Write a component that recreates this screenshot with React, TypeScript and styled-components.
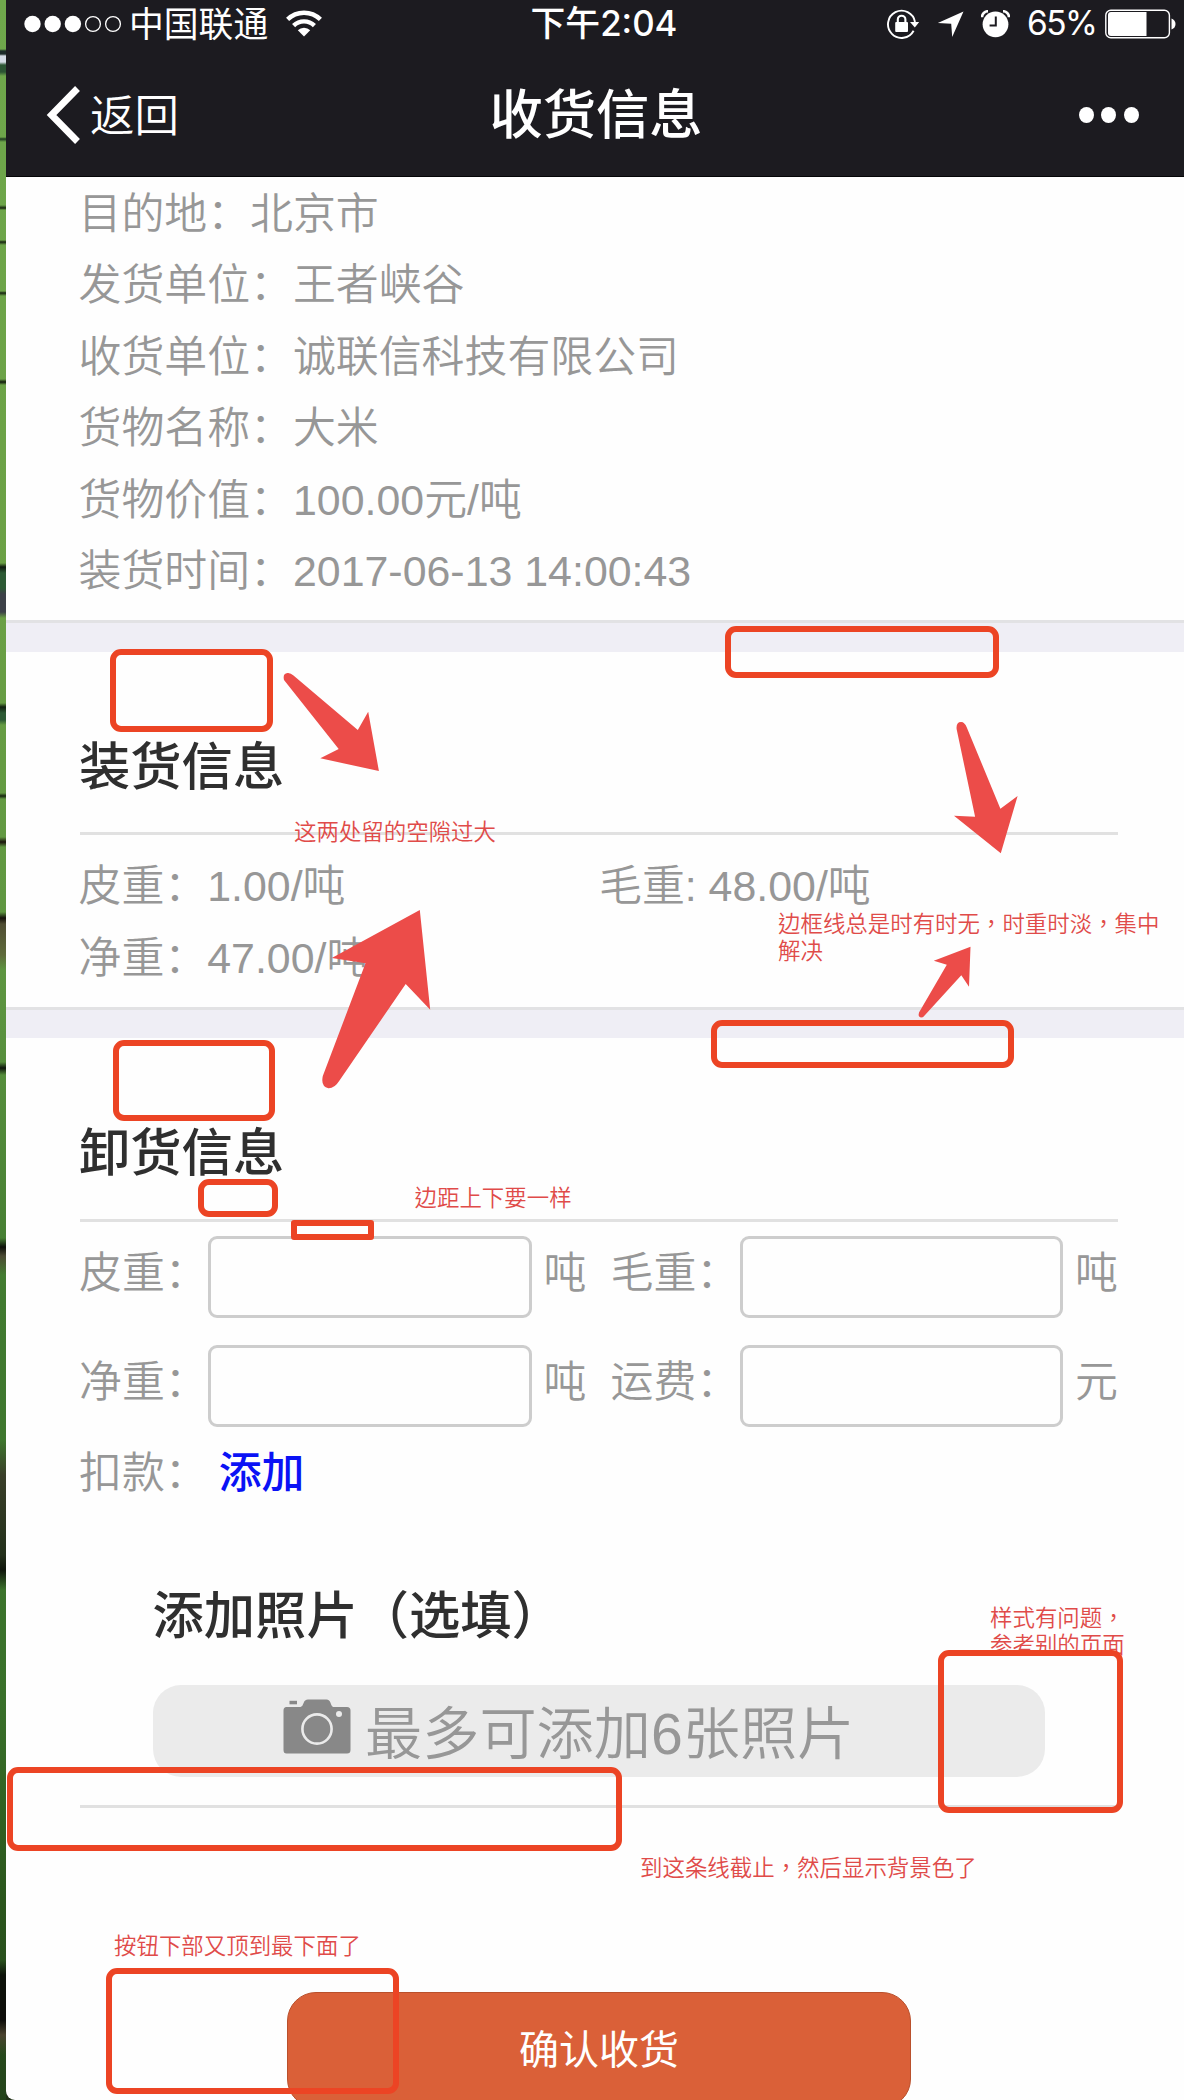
import React from "react";
import styled, { createGlobalStyle } from "styled-components";

const GlobalStyle = createGlobalStyle`
  * { box-sizing: border-box; }
  html, body { margin: 0; padding: 0; overflow: hidden; }
  body { background: #fefefe; }
`;

const SANS = `"Liberation Sans", "Noto Sans CJK SC", sans-serif`;

const Screen = styled.div`
  position: relative;
  display: grid;
  grid-template-columns: 6px 1fr;
  width: 1184px;
  height: 2100px;
  overflow: hidden;
  background: #22331a;
  font-family: ${SANS};
`;

const Desktop = styled.aside`
  background:
    linear-gradient(
      180deg,
      transparent 49px, #1b2a28 51px, #1b2a28 54px, #d5dce6 56px, #d5dce6 62px,
      #2b5433 65px, #2b5433 72px, transparent 76px, transparent 137px,
      #1d3a20 139px, transparent 142px, transparent 205px, #15230f 208px,
      transparent 210px, transparent 240px, #15230f 242px, transparent 245px,
      transparent 291px, #15230f 293px, transparent 296px, transparent 379px,
      #101a0c 382px, transparent 385px, transparent 563px, #0f1a0f 567px,
      #2c5a34 573px, #2c5a34 588px, #3c4148 594px, #3c4148 612px,
      transparent 618px, transparent 703px, #11200f 707px, #2c5a34 713px,
      #2c5a34 720px, transparent 725px, transparent 793px, #16240f 796px,
      transparent 799px, transparent 837px, #1a140c 842px, transparent 847px,
      transparent 912px, #14100a 918px, #4f4d33 924px, #5e6a3a 955px,
      transparent 970px, transparent 1062px, #0d150c 1068px, transparent 1075px,
      transparent 1238px, #0d100a 1247px, #4b4a33 1256px, transparent 1275px,
      transparent 1440px, #3a3f29 1475px, #2a351f 1530px, #23301b 1555px,
      #10160c 1570px, transparent 1590px, transparent 1960px, #0d120a 1975px,
      #0d0d0a 2020px, #4a432f 2035px, transparent 2055px
    ),
    linear-gradient(180deg, #6fa84c 0, #6ba045 600px, #5c9440 1000px, #417a30 1300px, #39702a 1700px, #2b561d 1900px, #24441b 2100px);
`;

const Phone = styled.main`
  display: flex;
  flex-direction: column;
  min-width: 0;
  height: 2100px;
  background: #fefefe;
  border-bottom-left-radius: 9px;
  overflow: hidden;
`;

const Header = styled.header`
  flex: none;
  height: 177px;
  background: #1c1b20;
  border-bottom: 1px solid #050507;
  color: #fff;
`;

const StatusBar = styled.div`
  display: grid;
  grid-template-columns: 1fr auto 1fr;
  align-items: center;
  height: 46px;
  padding: 0 8px 0 18px;
  font-size: 34.8px;
  line-height: 46px;
  white-space: nowrap;
`;

const Carrier = styled.div`
  display: flex;
  align-items: center;
`;

const CarrierName = styled.span`
  margin: 1px 0 0 6px;
  height: 46px;
`;

const Clock = styled.div`
  height: 48px;
  margin-right: -8px;
  font-family: Inter, "Noto Sans CJK SC", sans-serif;
  font-size: 34.8px;
  font-weight: 500;
`;

const Indicators = styled.div`
  display: flex;
  align-items: center;
  justify-content: flex-end;
`;

const Percent = styled.span`
  height: 48px;
  margin: 0 8.5px 0 16.5px;
  font-family: Inter, sans-serif;
  font-size: 33.5px;
  letter-spacing: -1.5px;
`;

const NavBar = styled.div`
  display: grid;
  grid-template-columns: 1fr auto 1fr;
  align-items: center;
  height: 130px;
  padding: 8px 45px 0 40px;
`;

const BackButton = styled.a`
  display: flex;
  align-items: center;
  height: 60px;
  color: #fff;
  font-size: 44.5px;
  line-height: 60px;
  font-weight: 350;
`;

const BackLabel = styled.span`
  margin-left: 7px;
  height: 57px;
`;

const NavTitle = styled.h1`
  height: 58px;
  margin: 0 -7px 0 0;
  font-size: 53.3px;
  line-height: 60px;
  font-weight: 500;
`;

const MoreButton = styled.div`
  display: flex;
  justify-content: flex-end;
  gap: 7.6px;
`;

const MoreDot = styled.i`
  width: 15px;
  height: 16px;
  border-radius: 50%;
  background: #fff;
`;

const Card = styled.section<{ $height: number }>`
  display: flex;
  flex-direction: column;
  flex: none;
  height: ${(p) => p.$height}px;
  padding: 0 66px 0 73.5px;
  border-bottom: 3px solid #e2e2e4;
`;

const Band = styled.div<{ $height: number }>`
  flex: none;
  height: ${(p) => p.$height}px;
  background: #efeef5;
`;

const InfoRow = styled.div`
  display: grid;
  grid-template-columns: 520.5px 1fr;
  height: 71.5px;
  color: #979797;
  font-size: 42.9px;
  font-weight: 350;
  line-height: 71.5px;
  white-space: pre;
`;

const InfoList = styled.div<{ $top: number }>`
  margin-left: -1px;
  padding-top: ${(p) => p.$top}px;
`;

const SectionTitle = styled.h2<{ $top: number; $indent?: number }>`
  margin: 0 0 0 -0.5px;
  padding: ${(p) => p.$top}px 0 0 ${(p) => p.$indent ?? 0}px;
  color: #2f2f2f;
  font-size: 51.3px;
  line-height: 60px;
  font-weight: 500;
  white-space: nowrap;
`;

const Rule = styled.hr<{ $top: number }>`
  flex: none;
  width: 100%;
  height: 3px;
  margin: ${(p) => p.$top}px 0 0;
  border: 0;
  background: #e1e1e1;
`;

const Form = styled.section`
  display: flex;
  flex-direction: column;
  padding: 0 66px 0 73.5px;
`;

const FieldRow = styled.div<{ $top: number }>`
  display: grid;
  grid-template-columns: 129px 323.5px 79px 129px 323.5px auto;
  height: 82px;
  margin: ${(p) => p.$top}px 0 0 -0.5px;
`;

const FieldText = styled.span<{ $unit?: boolean }>`
  height: 75px;
  padding-left: ${(p) => (p.$unit ? 12 : 0)}px;
  color: #979797;
  font-size: 42.9px;
  font-weight: 350;
  line-height: 75px;
  white-space: nowrap;
`;

const Field = styled.input`
  width: 323.5px;
  height: 82px;
  padding: 0 12px;
  border: 3px solid #cdcdcd;
  border-radius: 9px;
  background: #fefefe;
  font-size: 40px;
  outline: none;
`;

const DeductionRow = styled.div`
  display: flex;
  height: 60px;
  margin: 16px 0 0 -0.5px;
  color: #979797;
  font-size: 42.9px;
  font-weight: 350;
  line-height: 60px;
`;

const AddLink = styled.a`
  margin-left: 11px;
  color: #0a12f5;
  font-weight: 500;
`;

const PhotoButton = styled.div`
  display: flex;
  align-items: center;
  width: 891.5px;
  height: 91.5px;
  margin: 38px 0 0 73.5px;
  padding-left: 130px;
  border-radius: 28px;
  background: #ebebeb;
  color: #979797;
  font-size: 57.2px;
  font-weight: 350;
  line-height: 92px;
  white-space: nowrap;
`;

const PhotoLabel = styled.span`
  height: 86px;
  margin-left: 14px;
`;

const ConfirmButton = styled.button`
  flex: none;
  width: 624px;
  height: 116px;
  margin: 183.5px 0 0 281px;
  padding: 0;
  border: 1px solid #b9502c;
  border-radius: 29px;
  background: #da6038;
  color: #fff;
  font-family: ${SANS};
  font-size: 40px;
  line-height: 60px;
`;

const Markup = styled.div`
  position: absolute;
  inset: 0;
  pointer-events: none;
`;

const MarkBox = styled.div<{ $x: number; $y: number; $w: number; $h: number; $r?: number }>`
  position: absolute;
  left: ${(p) => p.$x}px;
  top: ${(p) => p.$y}px;
  width: ${(p) => p.$w}px;
  height: ${(p) => p.$h}px;
  border: 6px solid #ec4424;
  border-radius: ${(p) => p.$r ?? 11}px;
`;

const Note = styled.p<{ $x: number; $y: number }>`
  position: absolute;
  left: ${(p) => p.$x}px;
  top: ${(p) => p.$y - 14.75}px;
  margin: 0;
  color: #e04b49;
  font-family: "Noto Sans CJK TC", sans-serif;
  font-size: 22.45px;
  font-weight: 350;
  line-height: 26.5px;
  white-space: pre;
`;

const Arrows = styled.svg`
  position: absolute;
  inset: 0;
  fill: #ec4c49;
`;

const SignalDots = () => (
  <svg width="99" height="18" viewBox="0 0 99 18">
    {[8.5, 28.7, 48.9].map((x) => (
      <circle key={x} cx={x} cy="9" r="8.2" fill="#fff" />
    ))}
    {[69, 89].map((x) => (
      <circle key={x} cx={x} cy="9" r="7.4" fill="none" stroke="#fff" strokeWidth="1.3" />
    ))}
  </svg>
);

const WifiSvg = styled.svg`
  margin: -2px 0 0 18px;
`;

const WifiIcon = () => (
  <WifiSvg width="36" height="27" viewBox="0 0 36 27">
    <g fill="none" stroke="#fff" strokeWidth="4.4">
      <path d="M1.6 9.4 A23.5 23.5 0 0 1 34.4 9.4" />
      <path d="M7.6 15.6 A14.8 14.8 0 0 1 28.4 15.6" />
    </g>
    <path d="M18 26.5 L11.8 20.3 A8.8 8.8 0 0 1 24.2 20.3 Z" fill="#fff" />
  </WifiSvg>
);

const RotationLockIcon = () => (
  <svg width="34" height="32" viewBox="0 0 34 32">
    <path d="M27.6 22.7 A13.6 13.6 0 1 1 29 14" fill="none" stroke="#fff" strokeWidth="1.9" />
    <path d="M24 14 H33.2 L28.8 19.4 Z" fill="#fff" />
    <rect x="9.2" y="14" width="12.8" height="10" rx="1" fill="#fff" />
    <path d="M11.8 15 V11.5 A3.8 3.8 0 0 1 19.4 11.5 V15" fill="none" stroke="#fff" strokeWidth="2.1" />
  </svg>
);

const GlyphSvg = styled.svg`
  margin-left: 17px;
`;

const LocationIcon = () => (
  <GlyphSvg width="27" height="27" viewBox="0 0 27 27">
    <path d="M26.5 0.5 L15.2 26 L14.2 12.8 L0.8 12 Z" fill="#fff" />
  </GlyphSvg>
);

const AlarmIcon = () => (
  <GlyphSvg width="29" height="28" viewBox="0 0 29 28">
    <circle cx="14.5" cy="14.3" r="12.9" fill="#fff" />
    <path d="M1 7.2 A6 6 0 0 1 7 1.2 M28 7.2 A6 6 0 0 0 22 1.2" fill="none" stroke="#fff" strokeWidth="2.6" />
    <path d="M14.8 6.5 V15.6 H8.6" fill="none" stroke="#1c1b20" strokeWidth="2" />
  </GlyphSvg>
);

const BatteryIcon = () => (
  <svg width="71" height="30" viewBox="0 0 71 30">
    <rect x="0.8" y="1.3" width="63.6" height="27.4" rx="5" fill="none" stroke="#fff" strokeWidth="1.4" />
    <path d="M6 3 H41.5 V27 H6 A3 3 0 0 1 3 24 V6 A3 3 0 0 1 6 3 Z" fill="#fff" />
    <path d="M66.5 9.5 Q70.5 11 70.5 15 Q70.5 19 66.5 20.5 Z" fill="#fff" />
  </svg>
);

const ChevronIcon = () => (
  <svg width="37" height="60" viewBox="0 0 37 60">
    <path d="M31.5 3.5 L5.5 30 L31.5 56.5" fill="none" stroke="#fff" strokeWidth="6.8" />
  </svg>
);

const CameraSvg = styled.svg`
  margin-top: -9px;
`;

const CameraIcon = () => (
  <CameraSvg width="68" height="55" viewBox="0 0 68 55">
    <path
      d="M3.5 8 H17.5 Q19.5 7.6 20.5 4.2 Q21.7 0.5 25 0.5 H43.5 Q46.5 0.5 47.6 4 Q48.8 8 50.5 8 H64 Q67.5 8 67.5 11.5 V51 Q67.5 54.5 64 54.5 H3.5 Q0.5 54.5 0.5 51 V11.5 Q0.5 8 3.5 8 Z"
      fill="#888"
    />
    <rect x="6.5" y="1.8" width="7.5" height="3.5" fill="#888" />
    <circle cx="34" cy="30" r="14.6" fill="none" stroke="#ebebeb" strokeWidth="2.6" />
    <circle cx="56" cy="15" r="3" fill="#ebebeb" />
  </CameraSvg>
);

const shipment = [
  "目的地：北京市",
  "发货单位：王者峡谷",
  "收货单位：诚联信科技有限公司",
  "货物名称：大米",
  "货物价值：100.00元/吨",
  "装货时间：2017-06-13 14:00:43",
];

export default function App() {
  return (
    <Screen lang="zh-CN">
      <GlobalStyle />
      <Desktop />
      <Phone>
        <Header>
          <StatusBar>
            <Carrier>
              <SignalDots />
              <CarrierName>中国联通</CarrierName>
              <WifiIcon />
            </Carrier>
            <Clock>下午2:04</Clock>
            <Indicators>
              <RotationLockIcon />
              <LocationIcon />
              <AlarmIcon />
              <Percent>65%</Percent>
              <BatteryIcon />
            </Indicators>
          </StatusBar>
          <NavBar>
            <BackButton>
              <ChevronIcon />
              <BackLabel>返回</BackLabel>
            </BackButton>
            <NavTitle>收货信息</NavTitle>
            <MoreButton>
              <MoreDot />
              <MoreDot />
              <MoreDot />
            </MoreButton>
          </NavBar>
        </Header>

        <Card $height={446}>
          <InfoList $top={1.5}>
            {shipment.map((line) => (
              <InfoRow key={line}>{line}</InfoRow>
            ))}
          </InfoList>
        </Card>
        <Band $height={29} />

        <Card $height={358}>
          <SectionTitle $top={85.5}>装货信息</SectionTitle>
          <Rule $top={34.5} />
          <InfoList $top={16}>
            <InfoRow>
              <span>皮重：1.00/吨</span>
              <span>毛重: 48.00/吨</span>
            </InfoRow>
            <InfoRow>
              <span>净重：47.00/吨</span>
            </InfoRow>
          </InfoList>
        </Card>
        <Band $height={28} />

        <Form>
          <SectionTitle $top={86}>卸货信息</SectionTitle>
          <Rule $top={35} />
          <FieldRow $top={14}>
            <FieldText>皮重：</FieldText>
            <Field />
            <FieldText $unit>吨</FieldText>
            <FieldText>毛重：</FieldText>
            <Field />
            <FieldText $unit>吨</FieldText>
          </FieldRow>
          <FieldRow $top={27}>
            <FieldText>净重：</FieldText>
            <Field />
            <FieldText $unit>吨</FieldText>
            <FieldText>运费：</FieldText>
            <Field />
            <FieldText $unit>元</FieldText>
          </FieldRow>
          <DeductionRow>
            <span>扣款：</span>
            <AddLink>添加</AddLink>
          </DeductionRow>
          <SectionTitle $top={84} $indent={73.5}>添加照片（选填）</SectionTitle>
          <PhotoButton>
            <CameraIcon />
            <PhotoLabel>最多可添加6张照片</PhotoLabel>
          </PhotoButton>
          <Rule $top={28.5} />
        </Form>
        <ConfirmButton>确认收货</ConfirmButton>
      </Phone>

      <Markup lang="zh-TW">
        <Note $x={294} $y={832}>这两处留的空隙过大</Note>
        <Note $x={778} $y={924}>{"边框线总是时有时无，时重时淡，集中\n解决"}</Note>
        <Note $x={414.5} $y={1198}>边距上下要一样</Note>
        <Note $x={990} $y={1618}>{"样式有问题，\n参考别的页面"}</Note>
        <Note $x={640} $y={1868}>到这条线截止，然后显示背景色了</Note>
        <Note $x={114} $y={1946}>按钮下部又顶到最下面了</Note>
        <MarkBox $x={110} $y={649} $w={163} $h={83} />
        <MarkBox $x={725} $y={625.5} $w={274} $h={52.5} />
        <MarkBox $x={113} $y={1040} $w={162} $h={80.5} />
        <MarkBox $x={711} $y={1019.5} $w={303} $h={48.5} />
        <MarkBox $x={198} $y={1179} $w={79.5} $h={38} />
        <MarkBox $x={291} $y={1220} $w={83} $h={20} $r={3} />
        <MarkBox $x={938} $y={1650} $w={185} $h={163} />
        <MarkBox $x={7} $y={1767} $w={615} $h={83.5} />
        <MarkBox $x={106} $y={1968} $w={293} $h={126} />
        <Arrows width="1184" height="2100" viewBox="0 0 1184 2100">
          <path d="M284 680 Q282.5 673.5 287.5 673 Q290.5 672.6 293.5 675.5 L357.8 730 L368.2 711.7 L378.9 771 L320.3 758.3 L338.7 749 Z" />
          <path d="M419.8 910 L331.8 958 L365.5 963.3 L322.8 1076 Q320.5 1086.5 328.4 1088.3 Q334.5 1088.5 339.5 1080.5 L405.7 984 L430.2 1009.7 Z" />
          <path d="M956.6 729 Q956 722 961 722 Q964.5 721.8 966.8 727.5 L1000.4 808.7 L1017.6 796 L1000.8 853.3 L954 815.7 L975.1 816.7 Z" />
          <path d="M970.5 946.7 L933.8 960.7 L946.8 964.7 L919 1012.5 Q917.8 1017 921 1017.5 Q923.5 1017.5 925.5 1014.5 L961.3 975.3 L969 986.7 Z" />
        </Arrows>
      </Markup>
    </Screen>
  );
}
